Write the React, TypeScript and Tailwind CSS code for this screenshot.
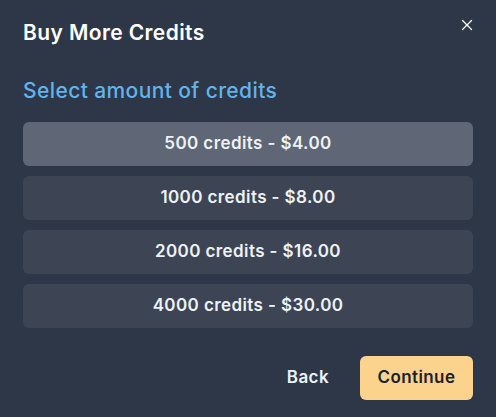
import { useState } from "react";
import { X } from "lucide-react";

const options = [
  { credits: 500, price: "$4.00" },
  { credits: 1000, price: "$8.00" },
  { credits: 2000, price: "$16.00" },
  { credits: 4000, price: "$30.00" },
];

export default function App() {
  const [selected, setSelected] = useState(0);

  return (
    <div
      className="w-[496px] h-[417px] bg-[#2d3748] px-[23px] relative"
      style={{ fontFamily: "Inter, 'Open Sans', sans-serif" }}
    >
      <button className="absolute right-[20px] top-[16px] text-white">
        <X size={18} strokeWidth={1.75} />
      </button>

      {/* Header */}
      <h1 className="pt-[20px] text-[21px] leading-[26px] font-semibold text-white tracking-[0.4px]">
        Buy More Credits
      </h1>

      <h2 className="mt-[32px] text-[21px] leading-[26px] font-medium text-[#63b3ed] tracking-[0.4px]">
        Select amount of credits
      </h2>

      {/* Options */}
      <div className="mt-[18px] flex flex-col gap-[10px]">
        {options.map((o, i) => (
          <button
            key={o.credits}
            onClick={() => setSelected(i)}
            className={`h-[44px] w-full rounded-md text-[17px] font-semibold tracking-[0.4px] text-[#edf2f7] ${
              selected === i ? "bg-[#5f6675]" : "bg-[#3d4554]"
            }`}
          >
            {o.credits} credits - {o.price}
          </button>
        ))}
      </div>

      {/* Footer */}
      <div className="mt-[28px] flex justify-end items-center gap-[15px]">
        <button className="h-[44px] px-[16px] text-[17px] font-semibold tracking-[0.4px] text-[#edf2f7]">
          Back
        </button>
        <button className="h-[44px] w-[113px] rounded-md bg-[#fbd38d] text-[17px] font-semibold tracking-[0.4px] text-[#1a202c]">
          Continue
        </button>
      </div>
    </div>
  );
}
